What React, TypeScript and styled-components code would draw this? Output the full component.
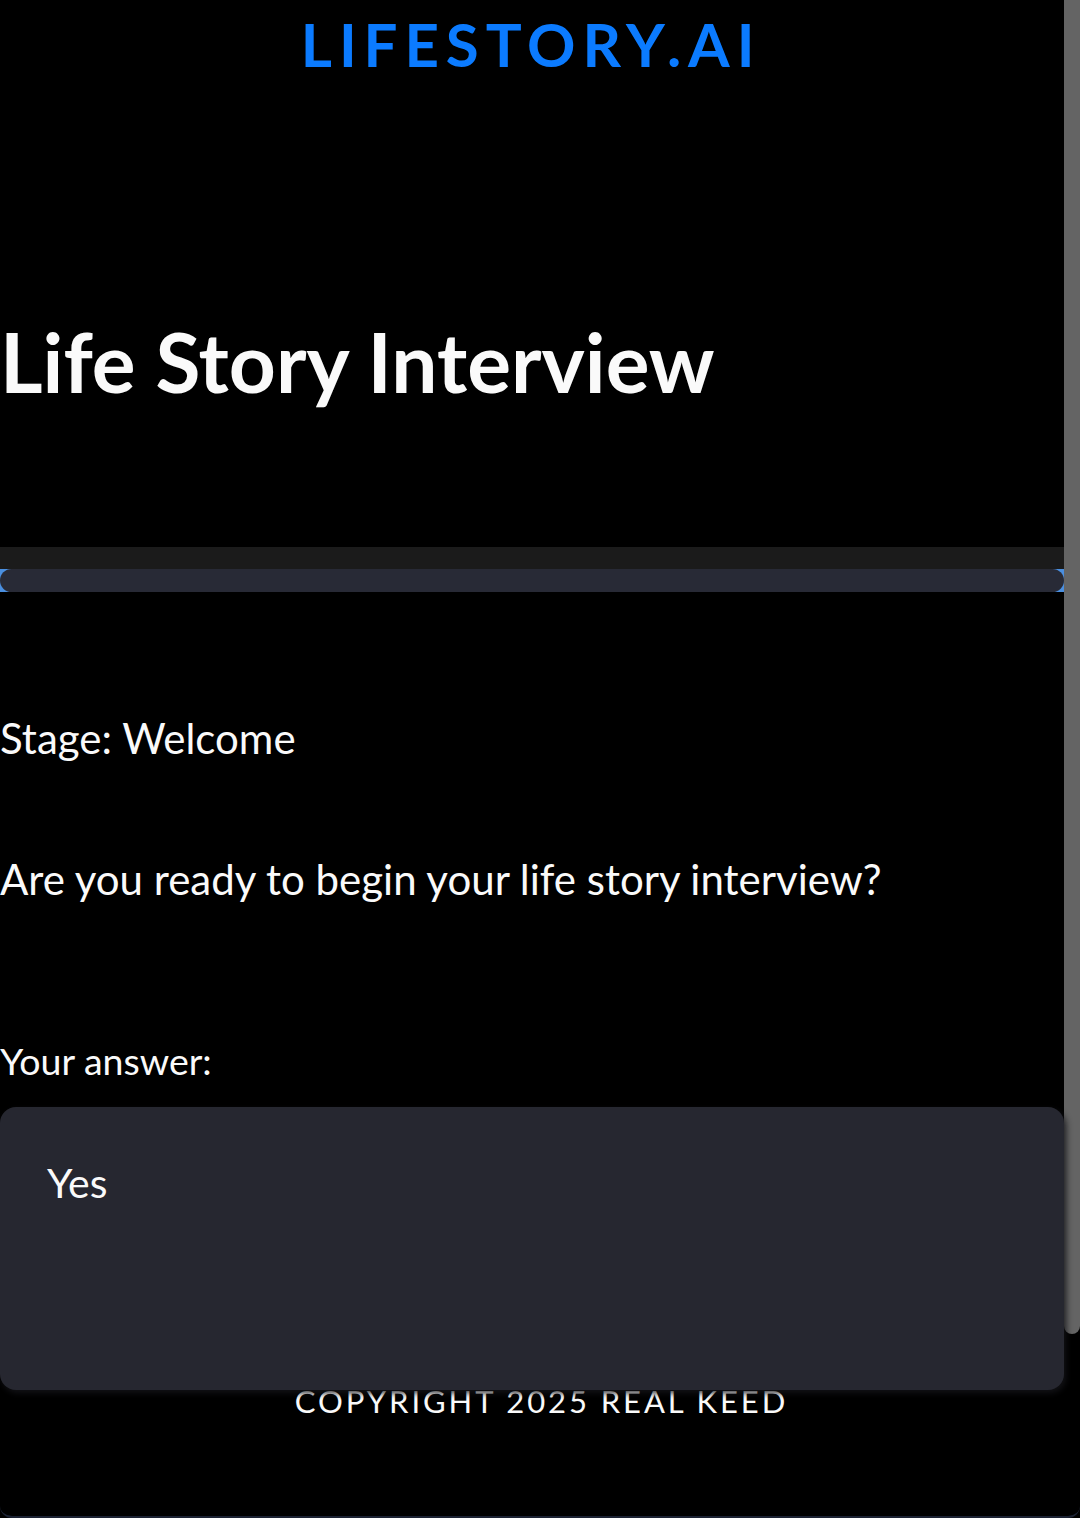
import React from "react";
import styled, { createGlobalStyle } from "styled-components";

const GlobalStyle = createGlobalStyle`
  html, body {
    margin: 0;
    padding: 0;
    background: #000000;
    overflow: hidden;
  }
  body {
    font-family: "Lato", "Liberation Sans", sans-serif;
    color: #fafafa;
  }
  * { box-sizing: border-box; }
`;

const Frame = styled.div`
  display: flex;
  flex-direction: row;
  width: 1080px;
  height: 1518px;
  background: #000000;
  border-bottom: 2px solid #1b2233;
  border-radius: 0 0 12px 12px;
  overflow: hidden;
`;

const Main = styled.main`
  display: flex;
  flex-direction: column;
  width: 1064px;
  flex: none;
`;

const Scrollbar = styled.div`
  width: 16px;
  flex: none;
  display: flex;
  flex-direction: column;
`;

const Thumb = styled.div`
  height: 1334px;
  background: #646464;
  border-radius: 0 0 8px 8px;
`;

const Header = styled.header`
  height: 80px;
  padding-top: 8px;
  text-align: center;
`;

const Logo = styled.div`
  font-size: 60px;
  line-height: 1.2;
  font-weight: 700;
  letter-spacing: 0.115em;
  padding-right: 0.03em;
  color: #0b7bff;
`;

const Title = styled.h1`
  margin: 232px 0 0 0;
  font-size: 82px;
  line-height: 1.2;
  font-weight: 700;
  color: #fafafa;
`;

const Band = styled.div`
  margin-top: 137px;
  height: 22px;
  background: #1b1b1b;
`;

const ProgressTrack = styled.div`
  height: 23px;
  background: #4a8fe0;
  display: flex;
`;

const ProgressFill = styled.div`
  flex: 1;
  background: #282a36;
  border-radius: 12px;
`;

const Text = styled.p<{ $size: number; $top: number }>`
  margin: ${(p) => p.$top}px 0 0 0;
  font-size: ${(p) => p.$size}px;
  line-height: 1.2;
  font-weight: 400;
  color: #fafafa;
`;

const Answer = styled.textarea`
  margin-top: 24px;
  height: 283px;
  width: 100%;
  padding: 51px 47px 0 47px;
  background: #262730;
  border: none;
  outline: none;
  resize: none;
  border-radius: 16px;
  box-shadow: 2px 3px 6px rgba(20, 20, 24, 0.9);
  font-family: "Lato", "Liberation Sans", sans-serif;
  font-size: 41px;
  line-height: 1.2;
  color: #fafafa;
  position: relative;
  z-index: 1;
`;

const Footer = styled.footer`
  margin-top: -4px;
  text-align: center;
  font-size: 31px;
  line-height: 1;
  letter-spacing: 0.094em;
  padding-left: 19px;
  color: #fafafa;
`;

export default function App() {
  return (
    <>
      <GlobalStyle />
      <Frame>
        <Main>
          <Header>
            <Logo>LIFESTORY.AI</Logo>
          </Header>
          <Title>Life Story Interview</Title>
          <Band />
          <ProgressTrack>
            <ProgressFill />
          </ProgressTrack>
          <Text $size={42} $top={121}>Stage: Welcome</Text>
          <Text $size={42} $top={90}>Are you ready to begin your life story interview?</Text>
          <Text $size={37.5} $top={134}>Your answer:</Text>
          <Answer defaultValue="Yes" readOnly />
          <Footer>COPYRIGHT 2025 REAL KEED</Footer>
        </Main>
        <Scrollbar>
          <Thumb />
        </Scrollbar>
      </Frame>
    </>
  );
}
